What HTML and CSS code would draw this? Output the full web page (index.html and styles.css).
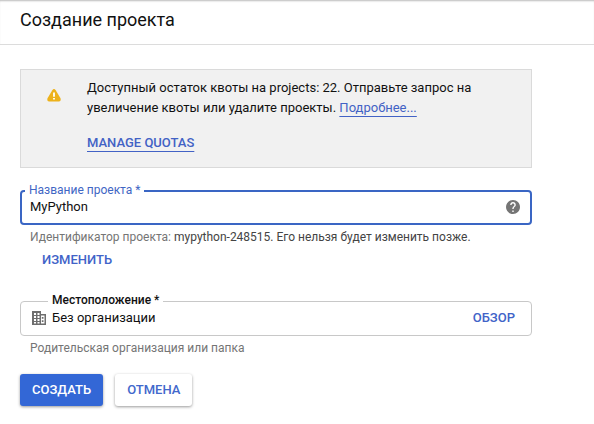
FILE: index.html
```html
<!DOCTYPE html>
<html lang="ru">
<head>
<meta charset="utf-8">
<meta name="viewport" content="width=device-width, initial-scale=1">
<title>Создание проекта</title>
<link rel="stylesheet" href="styles.css">
</head>
<body>
<header class="page-header">
  <h1 class="page-title">Создание проекта</h1>
</header>
<main class="content">
  <form class="form">
    <section class="notice">
      <svg class="notice-icon" viewBox="0 0 14 13" aria-hidden="true">
        <path d="M5.300 1.200Q7-1 8.700 1.200L13.500 9.300Q14.300 12.400 12 12.600H2Q-.3 12.400.5 9.300Z" fill="#edb21b"/>
        <path d="M6.100 3.500H7.900V7.800H6.100ZM6.100 9H7.900V10.600H6.100Z" fill="#fff"/>
      </svg>
      <div class="notice-body">
        <p class="notice-text">Доступный остаток квоты на projects: 22. Отправьте запрос на увеличение квоты или удалите проекты. <a class="link" href="#more">Подробнее...</a></p>
        <a class="link link-strong" href="#quotas">MANAGE QUOTAS</a>
      </div>
    </section>

    <div class="field field-active">
      <label class="field-label" for="name">Название проекта *</label>
      <input class="field-input" id="name" type="text" value="MyPython">
      <svg class="help-icon" viewBox="2 2 20 20" aria-hidden="true"><path fill="#757575" d="M12 2C6.480 2 2 6.480 2 12s4.480 10 10 10 10-4.480 10-10S17.520 2 12 2zm1 17h-2v-2h2v2zm2.070-7.750l-.9.920C13.450 12.900 13 13.500 13 15h-2v-.5c0-1.100.45-2.100 1.170-2.830l1.240-1.260c.37-.36.59-.86.59-1.410 0-1.100-.9-2-2-2s-2 .9-2 2H8c0-2.210 1.790-4 4-4s4 1.790 4 4c0 .88-.36 1.680-.93 2.250z"/></svg>
    </div>
    <p class="hint">Идентификатор проекта: <span class="hint-dark">mypython-248515. Его нельзя будет изменить позже.</span></p>
    <button class="text-button edit-button" type="button">ИЗМЕНИТЬ</button>

    <div class="field field-location">
      <label class="field-label" for="location">Местоположение *</label>
      <svg class="org-icon" viewBox="0 0 14 14" aria-hidden="true"><path fill="#6e6e6e" fill-rule="evenodd" d="M0 0H9V3H14V14H0ZM2 2V4H4V2ZM5.500 2V4H7.500V2ZM2 5V7H4V5ZM5.500 5V7H7.500V5ZM2 8V10H4V8ZM5.500 8V10H7.500V8ZM2 11V12.500H4V11ZM5.500 11V12.500H7.500V11ZM9 4.500V12.500H12.500V4.500Z"/><path fill="#6e6e6e" d="M9.800 6H11.500V7.700H9.800ZM9.800 9.300H11.500V11H9.800Z"/></svg>
      <input class="field-input" id="location" type="text" value="Без организации" readonly>
      <button class="text-button" type="button">ОБЗОР</button>
    </div>
    <p class="hint">Родительская организация или папка</p>

    <div class="actions">
      <button class="button button-primary" type="submit">СОЗДАТЬ</button>
      <button class="button" type="button">ОТМЕНА</button>
    </div>
  </form>
</main>
</body>
</html>
```
FILE: styles.css
```css
* {
  box-sizing: border-box;
}

body {
  margin: 0;
  background: #fff;
  color: #111;
  font-family: Roboto, "Liberation Sans", sans-serif;
  font-size: 13px;
  line-height: 20px;
}

.page-header {
  padding: 8px 20px 12px;
  border-bottom: 1px solid #dcdcdc;
  box-shadow: inset 0 2px 2px -1px #bbb;
}

.page-title {
  margin: 0;
  font-size: 18px;
  font-weight: 400;
  line-height: 24px;
}

.content {
  padding: 24px 20px 16px;
}

.form {
  max-width: 512px;
}

.notice {
  display: flex;
  gap: 26px;
  padding: 8px 26px 14px;
  border: 1px solid #dadada;
  background: #f1f1f1;
}

.notice-icon {
  flex: none;
  width: 14px;
  height: 13px;
  margin-top: 11px;
}

.notice-text {
  max-width: 400px;
  margin: 0 0 15px;
}

.link {
  color: #4262c5;
  text-decoration: underline 1px;
  text-decoration-skip-ink: none;
  text-underline-offset: 4px;
}

.link-strong {
  font-weight: 500;
}

.field {
  position: relative;
  display: flex;
  align-items: center;
  height: 35px;
  margin-top: 22px;
  padding: 0 10px 2px 11px;
  border: 1px solid #c8c8c8;
  border-radius: 4px;
}

.field-active {
  padding: 0 10px 2px 8px;
  border: 2px solid #3a66c4;
}

.field-label {
  position: absolute;
  top: -9px;
  left: 3px;
  padding: 0 4px;
  background: #fff;
  font-size: 12px;
  font-weight: 500;
  line-height: 14px;
}

.field-active .field-label {
  color: #3f66c4;
  font-weight: 400;
}

.field-location .field-label {
  left: 27px;
}

.field-input {
  flex: 1;
  min-width: 0;
  padding: 0;
  border: 0;
  outline: 0;
  background: transparent;
  color: #111;
  font: inherit;
}

.help-icon {
  width: 14px;
  height: 14px;
}

.org-icon {
  width: 14px;
  height: 14px;
  margin-right: 6px;
}

.hint {
  margin: 4px 10px 0;
  color: #757575;
  font-size: 12px;
  line-height: 16px;
}

.hint-dark {
  color: #444;
}

.text-button {
  padding: 0 6px;
  border: 0;
  background: none;
  color: #4163c8;
  font: inherit;
  font-weight: 500;
}

.edit-button {
  display: block;
  margin: 5px 16px 0;
}

.field-location {
  margin-top: 31px;
}

.actions {
  display: flex;
  gap: 12px;
  margin-top: 18px;
}

.button {
  padding: 6px 12px;
  border: 0;
  border-radius: 3px;
  background: #fff;
  box-shadow: 0 1px 3px rgba(0, 0, 0, 0.4);
  color: #4268cc;
  font: inherit;
  font-weight: 500;
}

.button-primary {
  background: #3367d6;
  color: #fff;
}
```
